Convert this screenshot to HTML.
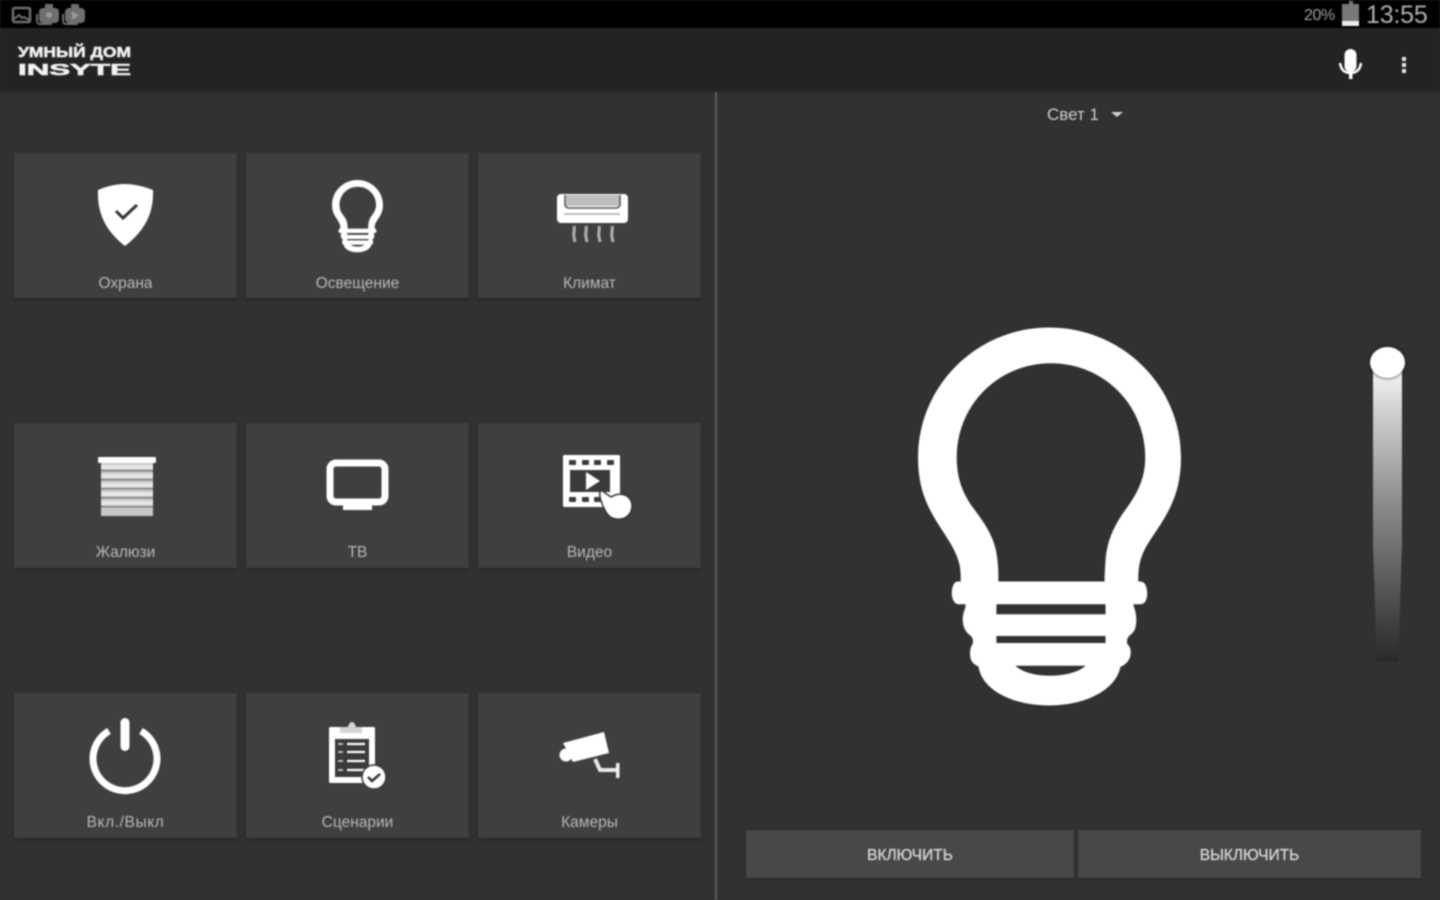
<!DOCTYPE html>
<html lang="ru">
<head>
<meta charset="utf-8">
<title>Умный дом INSYTE</title>
<style>
html,body{margin:0;padding:0;width:1440px;height:900px;overflow:hidden;background:#313131}
body{font-family:"Liberation Sans",sans-serif;position:relative}
#w{position:absolute;left:0;top:0;width:1440px;height:900px;filter:blur(.7px)}
.a{position:absolute}
.tile{position:absolute;width:223px;height:145px;background:#3f3f3f;box-shadow:0 2px 3px rgba(0,0,0,.22)}
.lab{position:absolute;left:0;right:0;text-align:center;top:122px;font-size:15.5px;line-height:18px;color:#b8b8b8}
.btn{position:absolute;top:830px;height:48px;background:#484848;box-shadow:0 1px 2px rgba(0,0,0,.25);color:#d8d8d8;font-size:15.5px;line-height:52px;text-align:center;-webkit-text-stroke:.3px #d8d8d8}
svg{position:absolute;left:0;top:0}
</style>
</head>
<body>
<div id="w">
<div class="a" style="left:0;top:0;width:1440px;height:28px;background:#000"></div>
<div class="a" style="left:0;top:28px;width:1440px;height:63px;background:#232323"></div>
<div class="a" style="left:0;top:91px;width:1440px;height:3px;background:#2b2b2b"></div>
<div class="a" style="left:715px;top:92px;width:2px;height:808px;background:#5c5c5c"></div>

<div class="a" style="left:1304px;top:6px;font-size:16px;line-height:19px;color:#a0a0a0;letter-spacing:-.4px">20%</div>
<div class="a" style="left:1366px;top:0;font-size:25px;line-height:30px;color:#b0b0b0;letter-spacing:-.2px">13:55</div>

<div class="tile" style="left:14px;top:153px"><div class="lab">Охрана</div></div>
<div class="tile" style="left:246px;top:153px"><div class="lab">Освещение</div></div>
<div class="tile" style="left:478px;top:153px"><div class="lab">Климат</div></div>
<div class="tile" style="left:14px;top:423px"><div class="lab" style="top:121px">Жалюзи</div></div>
<div class="tile" style="left:246px;top:423px"><div class="lab" style="top:121px">ТВ</div></div>
<div class="tile" style="left:478px;top:423px"><div class="lab" style="top:121px">Видео</div></div>
<div class="tile" style="left:14px;top:693px"><div class="lab" style="top:121px;letter-spacing:.6px">Вкл./Выкл</div></div>
<div class="tile" style="left:246px;top:693px"><div class="lab" style="top:121px">Сценарии</div></div>
<div class="tile" style="left:478px;top:693px"><div class="lab" style="top:121px">Камеры</div></div>

<div class="a" style="left:1047px;top:105px;font-size:17px;line-height:20px;color:#cfcfcf">Свет 1</div>

<div class="btn" style="left:746px;width:328px">ВКЛЮЧИТЬ</div>
<div class="btn" style="left:1078px;width:343px">ВЫКЛЮЧИТЬ</div>

<div class="a" style="left:1373px;top:370px;width:29px;height:292px;background:linear-gradient(#f5f5f5,#d0d0d0 14%,#8c8c8c 45%,#505050 78%,#3a3a3a 90%,#2a2a2a);clip-path:polygon(0 0,100% 0,100% 60%,87% 100%,13% 100%,0 60%)"></div>
<div class="a" style="left:1370px;top:347px;width:35px;height:31px;border-radius:50%;background:#fff;box-shadow:0 0 3px #111"></div>

<svg width="1440" height="900" viewBox="0 0 1440 900">
<defs>
<path id="bulb" fill-rule="evenodd" d="M1049 326C976 326 917 385 917 457C917 486 925 503 933 517C944 536 955 548 959 566C960 572 960 577 960 582L957 582C953 582 951 588 951 594C951 600 954 605 958 605L965 605C965 610 962 613 962 620C962 628 965 633 969 636C972 638 973 641 972 645C969 649 969 655 970 660C972 665 975 666 978 668C981 690 1010 707 1049 707C1088 707 1117 690 1121 668C1126 666 1130 662 1131 657C1132 651 1131 648 1128 645C1127 641 1128 638 1132 635C1136 632 1137 627 1137 620C1137 613 1135 610 1134 605L1141 605C1146 605 1148 600 1148 594C1148 588 1146 582 1141 582L1139 582C1139 577 1139 572 1140 566C1143 548 1155 536 1166 517C1174 503 1182 486 1182 457C1182 385 1123 326 1049 326ZM1051 362C1104 362 1146 404 1146 457C1146 478 1138 493 1128 507C1117 522 1108 537 1106 560C1105.500 568 1105 575 1105 582L998 582C998 575 998 568 997 560C995 537 983 522 972 507C962 493 956 478 956 457C956 404 998 362 1051 362ZM996 605L1106 605L1106 615L996 615ZM996 637L1106 637L1106 644L996 644ZM1015 667L1086 667C1078 674 1064 677 1050 677C1036 677 1023 674 1015 667Z"/>
</defs>

<use href="#bulb" fill="#fff" transform="translate(1049 516.500) scale(.992) translate(-1049 -516.500)"/>
<use href="#bulb" fill="#fff" transform="translate(156 118) scale(.192 .19)"/>

<!-- status icons -->
<g fill="none" stroke="#6e6e6e" stroke-width="2.500">
<rect x="13" y="8" width="17" height="14" rx="1.500"/>
<path d="M14 19l5-4 3 3 2-1 5 3" stroke-width="2"/>
<path d="M43 9h12a3 3 0 0 1 3 3v7a3 3 0 0 1-3 3h-12a3 3 0 0 1-3-3v-7a3 3 0 0 1 3-3zM37 14v7a3 3 0 0 0 3 3h12" stroke-width="2"/>
<path d="M69 9h12a3 3 0 0 1 3 3v7a3 3 0 0 1-3 3h-12a3 3 0 0 1-3-3v-7a3 3 0 0 1 3-3zM63 14v7a3 3 0 0 0 3 3h12" stroke-width="2"/>
</g>
<g fill="#6e6e6e">
<rect x="45" y="4" width="8" height="5"/><rect x="71" y="4" width="8" height="5"/>
<rect x="41" y="10" width="16" height="11" /><rect x="67" y="10" width="16" height="11"/>
</g>
<circle cx="49" cy="15" r="3" fill="#999"/><path d="M72 11l7 4.500-7 4.500z" fill="#999"/>
<path d="M1349 1h4v3h6v22h-17v-22h7z" fill="#787878"/>
<rect x="1342" y="21" width="17" height="5" fill="#eee"/>

<!-- logo -->
<text x="18" y="57" font-family="Liberation Sans" font-weight="700" font-size="14.500" fill="#f2f2f2" stroke="#f2f2f2" stroke-width=".5" textLength="113" lengthAdjust="spacingAndGlyphs">УМНЫЙ ДОМ</text>
<text x="18" y="75" font-family="Liberation Sans" font-weight="700" font-size="16" fill="#f2f2f2" stroke="#f2f2f2" stroke-width=".6" textLength="113" lengthAdjust="spacingAndGlyphs">INSYTE</text>

<!-- mic and menu -->
<rect x="1344.500" y="49" width="12" height="23" rx="6" fill="#fff"/>
<path d="M1340 63c1 7 5 10 10.500 10s9.500-3 10.500-10" fill="none" stroke="#fff" stroke-width="2.500"/>
<rect x="1349" y="72" width="3.500" height="7" fill="#fff"/>
<g fill="#e8e8e8"><rect x="1402" y="57" width="4" height="4"/><rect x="1402" y="63" width="4" height="4"/><rect x="1402" y="69" width="4" height="4"/></g>

<!-- dropdown -->
<path d="M1111 112h12l-6 5z" fill="#d5d5d5"/>

<!-- shield -->
<path d="M125 184C135 184 145 187 153 190C154 215 143 232 125 246C107 232 97 215 98 190C105 187 115 184 125 184Z" fill="#fff"/>
<path d="M116 211l7 7 14-13" fill="none" stroke="#333" stroke-width="3"/>

<!-- AC -->
<rect x="557" y="194" width="71" height="29" rx="4" fill="#fff"/>
<rect x="565" y="195" width="55" height="11" fill="#bdbdbd"/>
<path d="M565 195v8a4 4 0 0 0 4 5h47a4 4 0 0 0 4-5v-8" fill="none" stroke="#555" stroke-width="1.500"/>
<path d="M564 214h56" stroke="#aaa" stroke-width="1.500"/>
<g fill="none" stroke="#b0b0b0" stroke-width="3">
<path d="M574 226c1 4-1 7 0 11l1 5"/><path d="M586 226c1 4-1 7 0 11l1 5"/><path d="M599 226c1 4-1 7 0 11l1 5"/><path d="M612 226c1 4-1 7 0 11l1 5"/>
</g>

<!-- blinds -->
<rect x="98" y="457" width="58" height="6" rx="1.500" fill="#fff"/>
<rect x="101" y="463" width="52" height="53" fill="#c8c8c8"/>
<g fill="#e6e6e6">
<rect x="101" y="465" width="52" height="4"/><rect x="101" y="474" width="52" height="4"/><rect x="101" y="483" width="52" height="4"/><rect x="101" y="492" width="52" height="4"/><rect x="101" y="501" width="52" height="4"/>
</g>
<g fill="#808080">
<rect x="101" y="470" width="52" height="1.500"/><rect x="101" y="479" width="52" height="1.500"/><rect x="101" y="488" width="52" height="1.500"/><rect x="101" y="497" width="52" height="1.500"/><rect x="101" y="506" width="52" height="1.500"/>
</g>

<!-- TV -->
<rect x="330" y="463" width="55" height="39" rx="6" fill="none" stroke="#fff" stroke-width="7"/>
<rect x="343" y="504" width="29" height="6" fill="#fff"/>

<!-- video -->
<rect x="563" y="455" width="57" height="52" rx="1.500" fill="#fff"/>
<rect x="570" y="470" width="40" height="22" fill="#3a3a3a"/>
<g fill="#3a3a3a">
<rect x="569" y="460" width="7" height="5" rx="1"/><rect x="582" y="460" width="7" height="5" rx="1"/><rect x="594" y="460" width="7" height="5" rx="1"/><rect x="607" y="460" width="7" height="5" rx="1"/>
<rect x="569" y="497" width="7" height="5" rx="1"/><rect x="582" y="497" width="7" height="5" rx="1"/><rect x="594" y="497" width="7" height="5" rx="1"/>
</g>
<path d="M586 472l14 9-14 9z" fill="#fff"/>
<path d="M601 490L611 497C622 490 633 497 632 507C631 516 624 520 616 519C609 518 606 513 603 506C601 501 598 494 601 490Z" fill="#fff" stroke="#333" stroke-width="1.500"/>

<!-- power -->
<path d="M109 731A32 32 0 1 0 141 731" fill="none" stroke="#fff" stroke-width="7" stroke-linecap="butt"/>
<rect x="120.500" y="718" width="9" height="33" rx="4.500" fill="#fff"/>

<!-- scenarios -->
<rect x="329" y="727" width="46" height="56" rx="1.500" fill="#fff"/>
<rect x="335" y="739" width="34" height="38" fill="#3a3a3a"/>
<path d="M340 733v-6h8c1-3 2-5 4-5s3 2 4 5h6v6z" fill="#d5d5d5"/>
<g stroke="#fff" stroke-width="2.200">
<path d="M347 744h18M347 752h18M347 761h18M347 770h18"/>
<path d="M338 744h5M338 752h5M338 761h5M338 770h5" stroke-width="1.800" stroke="#ccc"/>
</g>
<circle cx="374" cy="777" r="12" fill="#fff" stroke="#3a3a3a" stroke-width="1.500"/>
<path d="M368 777l4 4 8-7" fill="none" stroke="#333" stroke-width="2.500"/>

<!-- camera -->
<path d="M563 743L604 732L609 753L573 762Z" fill="#fff"/>
<circle cx="566" cy="755" r="6.500" fill="#fff"/>
<path d="M595 759L600 770L616 770" fill="none" stroke="#e8e8e8" stroke-width="4"/>
<rect x="616" y="763" width="3.500" height="15" fill="#f0f0f0"/>
</svg>
</div>
</body>
</html>
